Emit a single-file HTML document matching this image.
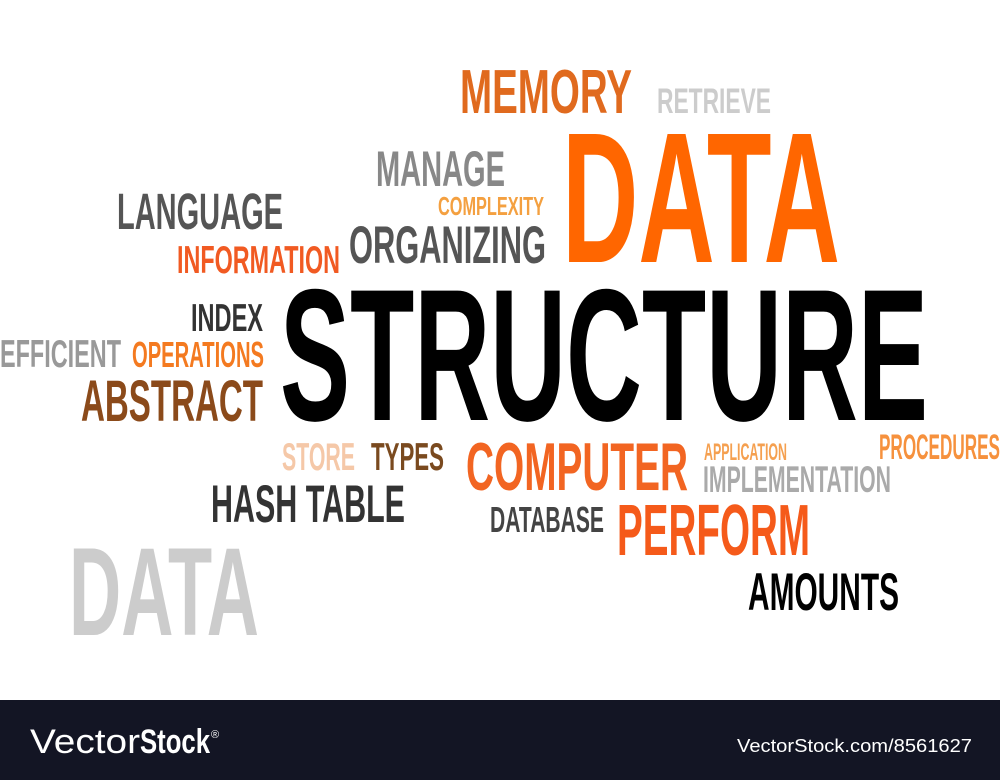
<!DOCTYPE html>
<html><head><meta charset="utf-8"><style>
html,body{margin:0;padding:0;background:#fff;width:1000px;height:780px;overflow:hidden}
svg{display:block}
text{font-family:"Liberation Sans",sans-serif;font-weight:bold}
</style></head><body>
<svg width="1000" height="780" viewBox="0 0 1000 780" xmlns="http://www.w3.org/2000/svg">
<rect width="1000" height="700" fill="#fff"/>
<g lengthAdjust="spacingAndGlyphs">
<text x="460" y="113" font-size="62" fill="#e06a1e" textLength="172" lengthAdjust="spacingAndGlyphs">MEMORY</text>
<text x="657" y="113" font-size="35" fill="#cccccc" textLength="114" lengthAdjust="spacingAndGlyphs">RETRIEVE</text>
<text x="562" y="262" font-size="186" fill="#ff6600" textLength="278" lengthAdjust="spacingAndGlyphs">DATA</text>
<text x="376" y="186" font-size="50" fill="#888888" textLength="129" lengthAdjust="spacingAndGlyphs">MANAGE</text>
<text x="438" y="215" font-size="26" fill="#f4a040" textLength="106" lengthAdjust="spacingAndGlyphs">COMPLEXITY</text>
<text x="117" y="229" font-size="51" fill="#555555" textLength="166" lengthAdjust="spacingAndGlyphs">LANGUAGE</text>
<text x="349" y="263" font-size="53" fill="#555555" textLength="197" lengthAdjust="spacingAndGlyphs">ORGANIZING</text>
<text x="177" y="273" font-size="39" fill="#f15a22" textLength="163" lengthAdjust="spacingAndGlyphs">INFORMATION</text>
<text x="280" y="420" font-size="188" fill="#000000" textLength="648" lengthAdjust="spacingAndGlyphs">STRUCTURE</text>
<text x="191" y="331" font-size="39" fill="#333333" textLength="72" lengthAdjust="spacingAndGlyphs">INDEX</text>
<text x="0" y="367" font-size="39" fill="#999999" textLength="121" lengthAdjust="spacingAndGlyphs">EFFICIENT</text>
<text x="132" y="367" font-size="36" fill="#f47a20" textLength="132" lengthAdjust="spacingAndGlyphs">OPERATIONS</text>
<text x="81" y="421" font-size="58" fill="#8b4a1a" textLength="182" lengthAdjust="spacingAndGlyphs">ABSTRACT</text>
<text x="282" y="470" font-size="39" fill="#f5c8a8" textLength="73" lengthAdjust="spacingAndGlyphs">STORE</text>
<text x="371" y="470" font-size="39" fill="#7a4a1f" textLength="73" lengthAdjust="spacingAndGlyphs">TYPES</text>
<text x="466" y="490" font-size="68" fill="#f26522" textLength="222" lengthAdjust="spacingAndGlyphs">COMPUTER</text>
<text x="704" y="460" font-size="24" fill="#f5a050" textLength="83" lengthAdjust="spacingAndGlyphs">APPLICATION</text>
<text x="879" y="459" font-size="35" fill="#f6913d" textLength="121" lengthAdjust="spacingAndGlyphs">PROCEDURES</text>
<text x="703" y="492" font-size="37" fill="#aaaaaa" textLength="188" lengthAdjust="spacingAndGlyphs">IMPLEMENTATION</text>
<text x="211" y="522" font-size="53" fill="#333333" textLength="194" lengthAdjust="spacingAndGlyphs">HASH TABLE</text>
<text x="490" y="532" font-size="36" fill="#444444" textLength="114" lengthAdjust="spacingAndGlyphs">DATABASE</text>
<text x="617" y="555" font-size="72" fill="#f55a1a" textLength="193" lengthAdjust="spacingAndGlyphs">PERFORM</text>
<text x="748" y="610" font-size="53" fill="#000000" textLength="151" lengthAdjust="spacingAndGlyphs">AMOUNTS</text>
<text x="69" y="635" font-size="125" fill="#cccccc" textLength="190" lengthAdjust="spacingAndGlyphs">DATA</text>
</g>
<rect x="0" y="700" width="1000" height="80" fill="#131524"/>
<text x="30" y="753" font-size="34" fill="#fff" font-weight="normal" style="font-weight:normal" textLength="110" lengthAdjust="spacingAndGlyphs">Vector</text>
<text x="140" y="753" font-size="34" fill="#fff" textLength="70" lengthAdjust="spacingAndGlyphs">Stock</text>
<text x="211" y="738" font-size="11" fill="#fff" style="font-weight:normal">®</text>
<text x="737" y="752" font-size="18" fill="#fff" style="font-weight:normal" textLength="235" lengthAdjust="spacingAndGlyphs">VectorStock.com/8561627</text>
</svg>
</body></html>
